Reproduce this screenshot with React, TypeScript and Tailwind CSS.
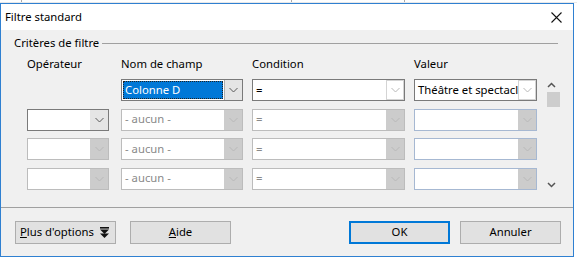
import React from 'react';

type Kind = 'focus' | 'normal' | 'active' | 'disabled' | 'blue';

function Chevron({ dim }: { dim?: boolean }) {
  return (
    <svg width="9" height="6" viewBox="0 0 9 6" className="block">
      <path d="M0.5 1 L4.5 5 L8.5 1" fill="none" stroke={dim ? '#b8b8b8' : '#5a5a5a'} strokeWidth="1" />
    </svg>
  );
}

function Combo({ kind, text, width }: { kind: Kind; text?: string; width: string }) {
  const border =
    kind === 'disabled' ? 'border-[#bcbcbc]' : kind === 'blue' ? 'border-[#a6b8d2]' : 'border-[#7a7a7a]';
  const btn =
    kind === 'disabled' || kind === 'blue'
      ? 'bg-[#cccccc]'
      : kind === 'focus'
        ? 'bg-[#e5e5e5] border-l border-[#adadad]'
        : kind === 'active'
          ? 'bg-[#e5e5e5]'
          : 'bg-white border border-[#d4d4d4]';
  return (
    <div className={`${width} h-[22px] flex bg-white border ${border}`}>
      <div className="flex-1 flex items-center min-w-0 overflow-hidden">
        {kind === 'focus' ? (
          <div className="h-full w-full p-px">
            <div className="h-full w-full bg-[#0078d7] text-white outline-1 outline-dotted outline-[#222] -outline-offset-1 flex items-center pl-[2px]">
              {text}
            </div>
          </div>
        ) : (
          <span
            className={`pl-[3px] whitespace-nowrap ${kind === 'disabled' || kind === 'blue' ? 'text-[#8a8a8a]' : 'text-black'}`}
          >
            {text}
          </span>
        )}
      </div>
      <div className={`w-[18px] h-full flex items-center justify-center ${btn}`}>
        <Chevron dim={kind === 'disabled' || kind === 'blue' || kind === 'normal'} />
      </div>
    </div>
  );
}

function Row({ op, name, cond, val }: { op?: Kind; name: Kind; cond: Kind; val: Kind }) {
  return (
    <div className="flex h-[22px]">
      <div className="w-[82px]">{op && <Combo kind={op} width="w-[82px]" />}</div>
      <div className="ml-[12px]">
        <Combo kind={name} width="w-[122px]" text={name === 'focus' ? 'Colonne D' : '- aucun -'} />
      </div>
      <div className="ml-[9px]">
        <Combo kind={cond} width="w-[153px]" text="=" />
      </div>
      <div className="ml-[9px]">
        <Combo kind={val} width="w-[123px]" text={val === 'normal' ? 'Théâtre et spectacl' : ''} />
      </div>
    </div>
  );
}

function Button({ children, className }: { children: React.ReactNode; className: string }) {
  return (
    <button className={`h-[23px] bg-[#e1e1e1] flex items-center justify-center ${className}`}>{children}</button>
  );
}

export default function App() {
  return (
    <div
      className="w-[577px] h-[258px] bg-white overflow-hidden text-[11.3px] text-black"
      style={{ fontFamily: '"Segoe UI", "Noto Sans", sans-serif' }}
    >
      <div className="h-[3px] overflow-hidden flex border-b border-[#e8e8e8]">
        <div className="w-[22px] border-r border-[#aaa]" />
        <div className="w-[270px] border-r border-[#aaa]" />
        <div className="w-[113px] border-r border-[#aaa]" />
      </div>
      <div className="w-[574px] h-[254px] border border-[#2f80d1] flex flex-col">
        <div className="h-[26px] bg-white flex items-center justify-between pl-[4px] pr-[11px]">
          <span>Filtre standard</span>
          <svg width="11" height="11" viewBox="0 0 11 11">
            <path d="M0.5 0.5 L10.5 10.5 M10.5 0.5 L0.5 10.5" stroke="#111" strokeWidth="1.1" />
          </svg>
        </div>
        <div className="flex-1 bg-[#f0f0f0] flex flex-col">
          <div className="flex items-center pl-[13px] pr-[15px] mt-[5px] h-[16px]">
            <span>Critères de filtre</span>
            <div className="flex-1 ml-[3px] border-t border-[#a0a0a0]" />
          </div>
          <div className="flex pl-[26px]">
            <div className="flex flex-col">
              <div className="flex h-[16px] mt-[5px] mb-[7px] items-center">
                <span className="w-[94px]">Opérateur</span>
                <span className="w-[131px]">Nom de champ</span>
                <span className="w-[162px]">Condition</span>
                <span>Valeur</span>
              </div>
              <div className="flex flex-col gap-[7.5px]">
                <Row name="focus" cond="normal" val="normal" />
                <Row op="active" name="disabled" cond="disabled" val="blue" />
                <Row op="disabled" name="disabled" cond="disabled" val="blue" />
                <Row op="disabled" name="disabled" cond="disabled" val="blue" />
              </div>
            </div>
            <div className="ml-[4px] mt-[28px] w-[20px] h-[112px] flex flex-col items-center">
              <svg width="9" height="6" viewBox="0 0 9 6" className="mt-[3px]">
                <path d="M1 5 L4.5 1.5 L8 5" fill="none" stroke="#555" strokeWidth="1.5" />
              </svg>
              <div className="mt-[4px] ml-[4px] w-[13px] h-[15px] bg-[#cdcdcd]" />
              <div className="flex-1" />
              <svg width="9" height="6" viewBox="0 0 9 6" className="mb-[3px]">
                <path d="M1 1 L4.5 4.5 L8 1" fill="none" stroke="#555" strokeWidth="1.5" />
              </svg>
            </div>
          </div>
          <div className="mt-[16px] border-t border-[#a0a0a0]" />
          <div className="flex mt-[13px] pl-[14px] pr-[12px]">
            <Button className="w-[101px] border border-[#adadad] pl-[4px] pr-[6px] !justify-between">
              <span>
                <span className="underline">P</span>lus d'options
              </span>
              <svg width="9" height="12" viewBox="0 0 9 12">
                <rect x="0" y="0" width="9" height="1.6" fill="#111" />
                <path d="M0 2.5 L9 2.5 L4.5 7 Z" fill="#111" />
                <path d="M0 6.5 L9 6.5 L4.5 11 Z" fill="#111" />
              </svg>
            </Button>
            <Button className="w-[101px] ml-[14px] border border-[#adadad]">
              <span>
                <span className="underline">A</span>ide
              </span>
            </Button>
            <div className="flex-1" />
            <Button className="w-[101px] border-2 border-[#0078d7]">OK</Button>
            <Button className="w-[101px] ml-[10px] border border-[#adadad]">Annuler</Button>
          </div>
        </div>
      </div>
    </div>
  );
}
